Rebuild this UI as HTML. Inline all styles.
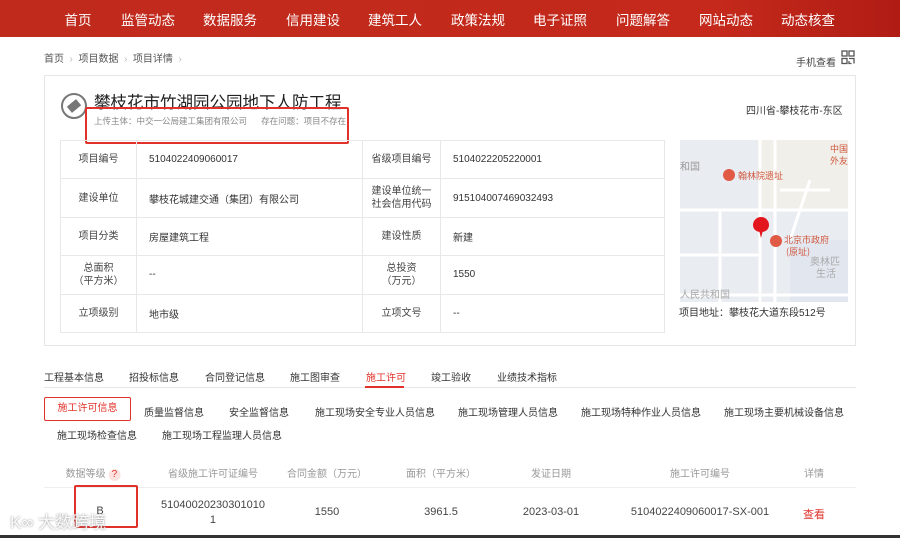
<!DOCTYPE html>
<html><head><meta charset="utf-8"><style>
*{margin:0;padding:0;box-sizing:border-box}
body{width:900px;height:538px;overflow:hidden;background:#fff;font-family:"Liberation Sans","Noto Sans CJK SC",sans-serif;color:#333;position:relative}
.a{position:absolute;white-space:nowrap}
.nav{position:absolute;left:0;top:0;width:900px;height:37px;background:linear-gradient(90deg,#c02a1c,#c4291b 80%,#b01c14)}
.nav span{position:absolute;top:9px;color:#fff;font-size:13.5px;transform:translateX(-50%)}
.card{position:absolute;left:44px;top:75px;width:812px;height:271px;border:1px solid #e6e6e6}
table{border-collapse:collapse;position:absolute;left:60px;top:140px;width:604px;font-size:10px;table-layout:fixed}
td{border:1px solid #e8e8e8;height:38.4px;padding:0 12px;color:#333}
td.l{text-align:center;color:#444;padding:0 4px;line-height:13px}
.t{font-size:10px;color:#333;top:369px}
.s{font-size:10px;color:#333}
.h{font-size:10px;color:#999;top:465px;transform:translateX(-50%)}
.d{font-size:11px;color:#444;top:506px;transform:translateX(-50%);text-align:center}
</style></head><body>
<div class="nav">
<span style="left:78px">首页</span><span style="left:148px">监管动态</span><span style="left:230px">数据服务</span><span style="left:313px">信用建设</span><span style="left:395px">建筑工人</span><span style="left:478px">政策法规</span><span style="left:560px">电子证照</span><span style="left:643px">问题解答</span><span style="left:726px">网站动态</span><span style="left:808px">动态核查</span>
</div>
<div class="a" style="left:44px;top:50px;font-size:10px;color:#555">首页 <span style="color:#bbb">&nbsp;›&nbsp;</span> 项目数据 <span style="color:#bbb">&nbsp;›&nbsp;</span> 项目详情 <span style="color:#bbb">&nbsp;›</span></div>
<div class="a" style="left:796px;top:54px;font-size:10px;color:#444">手机查看</div>
<svg class="a" style="left:841px;top:50px" width="14" height="15" viewBox="0 0 14 15"><g fill="none" stroke="#555" stroke-width="1.3"><rect x="1" y="1" width="5" height="5"/><rect x="8" y="1" width="5" height="5"/><rect x="1" y="8.5" width="5" height="5"/><path d="M8 8.5h5v5M8 11v2.5h2.5"/></g></svg>
<div class="card"></div>
<svg class="a" style="left:60px;top:92px" width="28" height="28"><circle cx="14" cy="14" r="12" fill="none" stroke="#777" stroke-width="2"/><rect x="8" y="10" width="12" height="8" fill="#777" transform="rotate(-40 14 14)"/></svg>
<div class="a" style="left:94px;top:89px;font-size:16.5px;color:#222">攀枝花市竹湖园公园地下人防工程</div>
<div class="a" style="left:94px;top:115px;font-size:8.5px;color:#888">上传主体：中交一公局建工集团有限公司 &nbsp;&nbsp;&nbsp;&nbsp; 存在问题：项目不存在</div>
<div class="a" style="left:85px;top:107px;width:264px;height:37px;border:2px solid #e0322a;border-radius:2px"></div>
<div class="a" style="left:746px;top:102px;font-size:10px;color:#333">四川省-攀枝花市-东区</div>
<table>
<colgroup><col style="width:76px"><col style="width:226px"><col style="width:78px"><col style="width:224px"></colgroup>
<tr><td class="l">项目编号</td><td>5104022409060017</td><td class="l">省级项目编号</td><td>5104022205220001</td></tr>
<tr><td class="l">建设单位</td><td>攀枝花城建交通（集团）有限公司</td><td class="l">建设单位统一<br>社会信用代码</td><td>915104007469032493</td></tr>
<tr><td class="l">项目分类</td><td>房屋建筑工程</td><td class="l">建设性质</td><td>新建</td></tr>
<tr><td class="l">总面积<br>（平方米）</td><td>--</td><td class="l">总投资<br>（万元）</td><td>1550</td></tr>
<tr><td class="l">立项级别</td><td>地市级</td><td class="l">立项文号</td><td>--</td></tr>
</table>
<svg class="a" style="left:680px;top:140px" width="168" height="162" viewBox="0 0 168 162">
<rect width="168" height="162" fill="#e9ecf1"/>
<rect x="78" y="0" width="90" height="68" fill="#f1efe9"/>
<rect x="110" y="100" width="58" height="62" fill="#e2e6ef"/>
<g stroke="#fff" stroke-width="3" fill="none"><path d="M0 70H168M0 115H80M80 0V162M95 0V162M0 155H168M40 70V162M130 40L110 100M100 50h50"/></g>
<text x="0" y="30" font-size="10" fill="#999" font-family="Noto Sans CJK SC">和国</text>
<circle cx="49" cy="35" r="6" fill="#e05a45"/><text x="58" y="39" font-size="9" fill="#d0583e" font-family="Noto Sans CJK SC">翰林院遗址</text>
<text x="150" y="12" font-size="9" fill="#d0583e" font-family="Noto Sans CJK SC">中国</text><text x="150" y="24" font-size="9" fill="#d0583e" font-family="Noto Sans CJK SC">外友</text>
<path d="M81 92c-5 0-8-3-8-7a8 8 0 0 1 16 0c0 4-3 7-8 7z" fill="#e4161d"/><path d="M79 90l2 8 2-8z" fill="#e4161d"/>
<circle cx="96" cy="101" r="6" fill="#e05a45"/><text x="104" y="103" font-size="9" fill="#d0583e" font-family="Noto Sans CJK SC">北京市政府</text><text x="106" y="115" font-size="9" fill="#d0583e" font-family="Noto Sans CJK SC">(原址)</text>
<text x="130" y="125" font-size="10" fill="#aaa" font-family="Noto Sans CJK SC">奥林匹</text><text x="136" y="137" font-size="10" fill="#aaa" font-family="Noto Sans CJK SC">生活</text>
<text x="0" y="158" font-size="10" fill="#aaa" font-family="Noto Sans CJK SC">人民共和国</text>
</svg>
<div class="a" style="left:679px;top:304px;font-size:10px;color:#333">项目地址：攀枝花大道东段512号</div>
<div class="a t" style="left:44px">工程基本信息</div>
<div class="a t" style="left:129px">招投标信息</div>
<div class="a t" style="left:205px">合同登记信息</div>
<div class="a t" style="left:290px">施工图审查</div>
<div class="a t" style="left:366px;color:#e0322a">施工许可</div>
<div class="a t" style="left:431px">竣工验收</div>
<div class="a t" style="left:497px">业绩技术指标</div>
<div class="a" style="left:44px;top:387px;width:812px;height:1px;background:#e6e6e6"></div>
<div class="a" style="left:365px;top:386px;width:39px;height:2px;background:#e0322a"></div>
<div class="a s" style="left:44px;top:397px;width:87px;height:24px;border:1px solid #e0322a;border-radius:2px;color:#e0322a;text-align:center;line-height:22px">施工许可信息</div>
<div class="a s" style="left:144px;top:404px">质量监督信息</div>
<div class="a s" style="left:229px;top:404px">安全监督信息</div>
<div class="a s" style="left:315px;top:404px">施工现场安全专业人员信息</div>
<div class="a s" style="left:458px;top:404px">施工现场管理人员信息</div>
<div class="a s" style="left:581px;top:404px">施工现场特种作业人员信息</div>
<div class="a s" style="left:724px;top:404px">施工现场主要机械设备信息</div>
<div class="a s" style="left:57px;top:427px">施工现场检查信息</div>
<div class="a s" style="left:162px;top:427px">施工现场工程监理人员信息</div>
<div class="a h" style="left:93px">数据等级 <span style="display:inline-block;width:12px;height:12px;border-radius:6px;background:#fde3df;color:#e0322a;text-align:center;line-height:12px">?</span></div>
<div class="a h" style="left:213px">省级施工许可证编号</div>
<div class="a h" style="left:327px">合同金额（万元）</div>
<div class="a h" style="left:441px">面积（平方米）</div>
<div class="a h" style="left:551px">发证日期</div>
<div class="a h" style="left:700px">施工许可编号</div>
<div class="a h" style="left:814px">详情</div>
<div class="a" style="left:44px;top:487px;width:812px;height:1px;background:#eee"></div>
<div class="a d" style="left:100px;top:505px">B</div>
<div class="a d" style="left:213px;top:498px;line-height:15px">51040020230301010<br>1</div>
<div class="a d" style="left:327px">1550</div>
<div class="a d" style="left:441px">3961.5</div>
<div class="a d" style="left:551px">2023-03-01</div>
<div class="a d" style="left:700px">5104022409060017-SX-001</div>
<div class="a d" style="left:814px;color:#e0322a">查看</div>
<div class="a" style="left:74px;top:485px;width:64px;height:43px;border:2px solid #e0322a;border-radius:2px"></div>
<div class="a" style="left:10px;top:508px;font-size:17px;color:rgba(255,255,255,.9);text-shadow:0 0 2px #888">K∞ 大数跨境</div>
<div class="a" style="left:0;top:535px;width:900px;height:3px;background:#333"></div>
</body></html>
